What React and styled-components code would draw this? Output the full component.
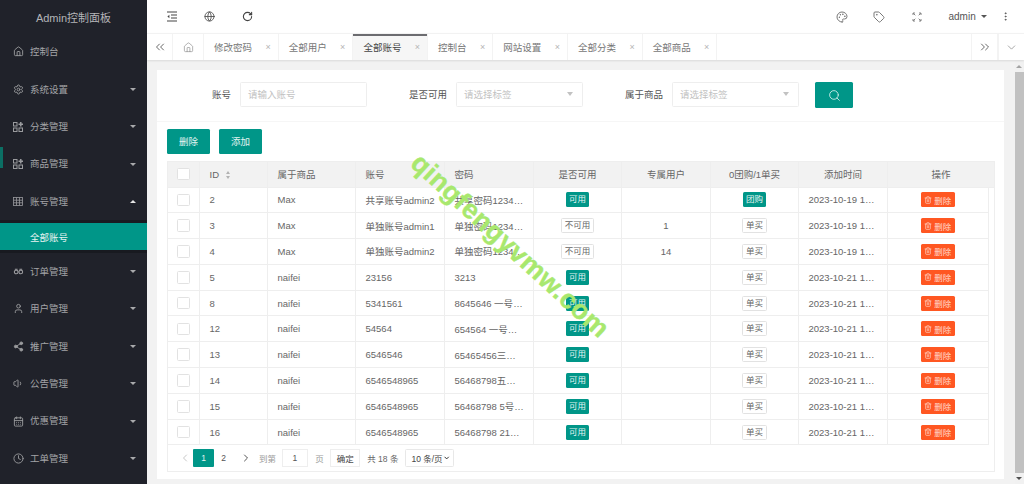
import React from 'react';
import styled, { createGlobalStyle } from 'styled-components';
import {
  Home, User, Share2, Volume1, CalendarDays, Clock, Settings,
  Palette, Tag as TagIcon, RotateCw, Globe, ChevronsLeft, ChevronsRight, ChevronDown,
  ChevronLeft, ChevronRight, Search, Trash2, MoreVertical,
} from 'lucide-react';

const GlobalStyle = createGlobalStyle`
  html, body { margin: 0; height: 100%; overflow: hidden; }
  body {
    font-family: "Liberation Sans", "Noto Sans CJK SC", sans-serif;
    font-size: 9.5px;
    color: #666;
    background: #f2f2f2;
  }
  * { box-sizing: border-box; }
`;

const Shell = styled.div`
  display: flex;
  height: 484px;
  position: relative;
  overflow: hidden;
`;

const Sidebar = styled.aside`
  width: 147px;
  flex: none;
  background: #20222a;
  color: #a3a4a7;
`;

const Logo = styled.div`
  height: 33.3px;
  display: flex;
  align-items: center;
  justify-content: center;
  font-size: 11px;
  color: #b4b5b8;
`;

const NavItem = styled.div`
  height: 37.4px;
  display: flex;
  align-items: center;
  padding: 0 11px 0 13px;
  position: relative;
`;

const NavIcon = styled.span`
  width: 17px;
  display: flex;
  color: #9a9b9e;
`;

const NavLabel = styled.span`
  flex: 1;
  line-height: 1;
`;

const Caret = styled.span`
  width: 0;
  height: 0;
  border-left: 3.5px solid transparent;
  border-right: 3.5px solid transparent;
  border-top: ${(p) => (p.$up ? '0' : `3.5px solid ${p.$dark ? '#555' : '#a9aaac'}`)};
  border-bottom: ${(p) => (p.$up ? '3.5px solid #e6e6e6' : '0')};
`;

const HoverMark = styled.span`
  position: absolute;
  left: 0;
  top: 2px;
  width: 3px;
  height: 21px;
  background: #0b6f64;
`;

const SubMenu = styled.div`
  height: 32.6px;
  padding: 3px 0 3px;
  background: #181a20;
`;

const SubItem = styled.div`
  height: 100%;
  background: #009688;
  color: #e8f3f2;
  display: flex;
  align-items: center;
  padding-left: 30px;
`;

const Main = styled.div`
  flex: 1;
  min-width: 0;
  display: flex;
  flex-direction: column;
`;

const TopBar = styled.header`
  height: 33px;
  flex: none;
  background: #fff;
  display: flex;
  align-items: center;
  padding-left: 6.5px;
  color: #555;
`;

const BarSlot = styled.span`
  width: 37.5px;
  display: flex;
  justify-content: center;
  color: ${(p) => p.$color || '#444'};
`;

const Spacer = styled.span`
  flex: 1;
`;

const UserMenu = styled.div`
  display: flex;
  align-items: center;
  gap: 5px;
  margin-left: 13px;
  width: 38px;
  flex: none;
  font-size: 10px;
  color: #555;
`;

const TabStrip = styled.nav`
  height: 27px;
  flex: none;
  background: #fff;
  display: flex;
  border-top: 1px solid #f2f2f2;
  box-shadow: 0 1px 2px rgba(0, 0, 0, 0.1);
  position: relative;
`;

const TabButton = styled.span`
  width: ${(p) => p.$w}px;
  flex: none;
  display: flex;
  align-items: center;
  justify-content: center;
  color: ${(p) => p.$color || '#555'};
  border-right: ${(p) => (p.$noline ? '0' : '1px solid #f3f3f3')};
  border-left: ${(p) => (p.$leftline ? '1px solid #f3f3f3' : '0')};
`;

const Tab = styled.span`
  display: flex;
  align-items: center;
  flex: none;
  padding: 0 5.7px 0 10px;
  gap: 12px;
  color: ${(p) => (p.$active ? '#444' : '#777')};
  background: ${(p) => (p.$active ? '#f6f6f6' : 'transparent')};
  border-right: 1px solid #f3f3f3;
  box-shadow: ${(p) => (p.$active ? 'inset 0 2px 0 #6c6c70' : 'none')};
`;

const TabClose = styled.span`
  width: 8px;
  font-size: 9px;
  line-height: 1;
  color: #b5b5b5;
  text-align: center;
`;

const ContentRow = styled.div`
  flex: 1;
  min-height: 0;
  display: flex;
`;

const Content = styled.main`
  flex: 1;
  min-width: 0;
  padding: 10px 10.5px 0 10px;
`;

const ScrollTrack = styled.div`
  width: 9.5px;
  flex: none;
  background: #f1f1f1;
  display: flex;
  flex-direction: column;
  align-items: center;
`;

const ScrollArrow = styled.span`
  width: 0;
  height: 0;
  flex: none;
  margin: ${(p) => (p.$down ? '4px 0' : '4.5px 0 4.2px')};
  border-left: 3px solid transparent;
  border-right: 3px solid transparent;
  border-bottom: ${(p) => (p.$down ? '0' : '3px solid #a3a3a3')};
  border-top: ${(p) => (p.$down ? '3px solid #505050' : '0')};
`;

const ScrollThumb = styled.div`
  width: 100%;
  flex: 1;
  background: #c1c1c1;
`;

const Card = styled.section`
  background: #fff;
  height: 409px;
  display: flex;
  flex-direction: column;
`;

const FilterForm = styled.div`
  height: 51.5px;
  flex: none;
  padding-top: 11.5px;
  border-bottom: 1px solid #f6f6f6;
  display: flex;
  align-items: flex-start;
`;

const FilterItem = styled.div`
  width: 216px;
  flex: none;
  display: flex;
  align-items: center;
  height: 25.5px;
`;

const FilterLabel = styled.label`
  width: 83px;
  padding-right: 9px;
  text-align: right;
  color: #555;
`;

const FieldBox = styled.div`
  width: 127px;
  height: 25.5px;
  border: 1px solid #eee;
  border-radius: 1.5px;
  display: flex;
  align-items: center;
  justify-content: space-between;
  padding: 0 9px 0 7px;
  color: #c2c2c2;
`;

const FieldCaret = styled.span`
  width: 0;
  height: 0;
  border-left: 3.5px solid transparent;
  border-right: 3.5px solid transparent;
  border-top: 4px solid #c2c2c2;
`;

const SearchButton = styled.button`
  width: 38px;
  height: 26px;
  margin: 0.5px 0 0 10px;
  border: 0;
  border-radius: 1.5px;
  background: #009688;
  color: #d5efec;
  display: flex;
  align-items: center;
  justify-content: center;
  padding: 0;
`;

const Toolbar = styled.div`
  display: flex;
  gap: 9px;
  padding: 7px 10px 7px;
  flex: none;
`;

const PrimaryButton = styled.button`
  width: 43px;
  height: 25px;
  border: 0;
  border-radius: 1.5px;
  background: #009688;
  color: #e4f4f2;
  font: inherit;
  padding: 0;
`;

const TableWrap = styled.div`
  margin: 0 9px 0 10px;
  border: 1px solid #eee;
  height: 311px;
  display: flex;
  flex-direction: column;
  position: relative;
`;

const DataTable = styled.table`
  width: 827px;
  margin: -1px 0 0 -1px;
  table-layout: fixed;
  border-collapse: collapse;
`;

const HeadCell = styled.th`
  height: 26px;
  padding: ${(p) => (p.$center ? '0 9px' : '0 8px 0 9.5px')};
  background: #f2f2f2;
  border: 1px solid #eee;
  font-weight: 400;
  color: #666;
  text-align: ${(p) => (p.$center ? 'center' : 'left')};
  white-space: nowrap;
  overflow: hidden;
`;

const Cell = styled.td`
  height: 25.8px;
  padding: ${(p) => (p.$center ? '0 9px' : '0 8px 0 9.5px')};
  border: 1px solid #eee;
  color: #666;
  text-align: ${(p) => (p.$center ? 'center' : 'left')};
  white-space: nowrap;
  overflow: hidden;
  text-overflow: ellipsis;
`;

const ActionCell = styled(Cell)`
  padding: 0;
  text-overflow: clip;
`;

const GutterCell = styled.td`
  border: 1px solid #eee;
  border-top: 0;
  border-bottom: 0;
`;

const CheckCell = styled.td`
  padding: 0;
  border: 1px solid #eee;
  position: relative;
  box-shadow: 1px 0 3px rgba(0, 0, 0, 0.07);
`;

const CheckHead = styled.th`
  padding: 0;
  height: 26px;
  background: #f2f2f2;
  border: 1px solid #eee;
  position: relative;
  box-shadow: 1px 0 3px rgba(0, 0, 0, 0.07);
`;

const Checkbox = styled.span`
  display: block;
  width: 12.5px;
  height: 12.5px;
  margin: 0 auto;
  background: #fff;
  border: 1px solid #e2e2e2;
  border-radius: 1.5px;
`;

const SortIcon = styled.span`
  display: inline-flex;
  flex-direction: column;
  gap: 1.5px;
  margin-left: 7px;
  vertical-align: middle;
`;

const SortUp = styled.i`
  width: 0;
  height: 0;
  border-left: 2.5px solid transparent;
  border-right: 2.5px solid transparent;
  border-bottom: 3px solid #b2b2b2;
`;

const SortDown = styled(SortUp)`
  border-bottom: 0;
  border-top: 3px solid #b2b2b2;
`;

const Badge = styled.span`
  display: inline-block;
  height: 15px;
  line-height: ${(p) => (p.$on ? '15px' : '13px')};
  padding: 0 ${(p) => (p.$on ? '2.8px' : '2.5px')};
  font-size: 8.5px;
  border-radius: 1.5px;
  vertical-align: middle;
  background: ${(p) => (p.$on ? '#009688' : '#fff')};
  color: ${(p) => (p.$on ? '#e4f4f2' : '#666')};
  border: ${(p) => (p.$on ? '0' : '1px solid #e2e2e2')};
`;

const DeleteButton = styled.span`
  display: inline-flex;
  align-items: center;
  justify-content: center;
  gap: 2.5px;
  width: 34px;
  height: 15px;
  margin-right: 1px;
  background: #ff5722;
  border-radius: 1.5px;
  color: #ffd9cc;
  font-size: 8.5px;
  vertical-align: middle;
`;

const Pager = styled.div`
  flex: 1;
  display: flex;
  align-items: center;
  padding-left: 8px;
  font-size: 8.5px;
  color: #999;
`;

const PagerArrow = styled.span`
  display: flex;
  width: ${(p) => p.$w}px;
  justify-content: center;
  color: ${(p) => p.$color};
`;

const PageCurrent = styled.span`
  width: 21px;
  height: 18px;
  background: #009688;
  color: #e4f4f2;
  border-radius: 1px;
  display: flex;
  align-items: center;
  justify-content: center;
`;

const PageNumber = styled.span`
  width: 19px;
  text-align: center;
  color: #555;
`;

const PagerText = styled.span`
  margin: ${(p) => p.$m || '0'};
  color: ${(p) => p.$color || '#999'};
  white-space: nowrap;
`;

const PageInput = styled.span`
  width: 26.5px;
  height: 18px;
  margin-left: 5.7px;
  border: 1px solid #eee;
  display: flex;
  align-items: center;
  justify-content: center;
  color: #555;
`;

const ConfirmButton = styled.span`
  width: 30px;
  height: 18px;
  margin-left: 6.5px;
  border: 1px solid #eee;
  display: flex;
  align-items: center;
  justify-content: center;
  color: #444;
`;

const PageSize = styled.span`
  width: 48.5px;
  height: 18px;
  margin-left: 7px;
  border: 1px solid #e8e8e8;
  border-radius: 1.5px;
  display: flex;
  align-items: center;
  justify-content: space-between;
  padding: 0 3px 0 5px;
  white-space: nowrap;
  color: #444;
`;

const Watermark = styled.div`
  position: absolute;
  left: 510px;
  top: 246px;
  transform: translate(-50%, -50%) rotate(42.5deg);
  font-size: 27px;
  font-weight: 700;
  letter-spacing: 0.4px;
  white-space: nowrap;
  color: #a8e86e;
  -webkit-text-stroke: 0.4px #a8e86e;
  pointer-events: none;
`;

const OrderIcon = (
  <svg width="11" height="11" viewBox="0 0 24 24" fill="none" stroke="currentColor" strokeWidth="2.4">
    <circle cx="7" cy="13" r="4" />
    <circle cx="17" cy="13" r="4" />
    <path d="M4 7h6M14 7h6" />
  </svg>
);

const ShrinkIcon = (
  <svg width="12" height="11" viewBox="0 0 12 11" fill="none" stroke="currentColor" strokeWidth="1.1">
    <path d="M1 1h10M5 4h6M5 7h6M1 10h10" />
    <path d="M3.4 3.8 1.4 5.5l2 1.7z" fill="currentColor" stroke="none" />
  </svg>
);

const FullScreenIcon = (
  <svg width="10" height="10" viewBox="0 0 10 10" fill="none" stroke="currentColor" strokeWidth="0.9">
    <path d="M1 3V1h2M7 1h2v2M9 7v2H7M3 9H1V7" />
    <path d="m1.3 1.3 2 2M8.7 1.3l-2 2M8.7 8.7l-2-2M1.3 8.7l2-2" />
  </svg>
);

const AppsIcon = (
  <svg width="10" height="10" viewBox="0 0 10 10" fill="none" stroke="currentColor" strokeWidth="1">
    <rect x="0.5" y="0.5" width="3.5" height="3.5" />
    <rect x="0.5" y="6" width="3.5" height="3.5" />
    <rect x="6" y="6" width="3.5" height="3.5" />
    <path d="M7.75 0v4.5M5.5 2.25H10" strokeWidth="1.6" />
  </svg>
);

const GridIcon = (
  <svg width="10" height="9" viewBox="0 0 10 9" fill="none" stroke="currentColor" strokeWidth="0.8">
    <rect x="0.5" y="0.5" width="9" height="8" />
    <path d="M0.5 3.2h9M0.5 5.8h9M3.5 0.5v8M6.5 0.5v8" />
  </svg>
);

const navTop = [
  { label: '控制台', icon: <Home size={11} />, plain: true },
  { label: '系统设置', icon: <Settings size={11} /> },
  { label: '分类管理', icon: AppsIcon },
  { label: '商品管理', icon: AppsIcon, mark: true },
];

const navBottom = [
  { label: '订单管理', icon: OrderIcon },
  { label: '用户管理', icon: <User size={11} /> },
  { label: '推广管理', icon: <Share2 size={11} fill="currentColor" /> },
  { label: '公告管理', icon: <Volume1 size={11} /> },
  { label: '优惠管理', icon: <CalendarDays size={11} /> },
  { label: '工单管理', icon: <Clock size={11} /> },
];

const tabs = ['修改密码', '全部用户', '全部账号', '控制台', '网站设置', '全部分类', '全部商品'];

const rows = [
  [2, 'Max', '共享账号admin2', '共享密码1234567', true, '', true, '2023-10-19 12:30:16'],
  [3, 'Max', '单独账号admin1', '单独密码1234567', false, '1', false, '2023-10-19 12:30:16'],
  [4, 'Max', '单独账号admin2', '单独密码1234567', false, '14', false, '2023-10-19 12:30:16'],
  [5, 'naifei', '23156', '3213', true, '', false, '2023-10-21 12:30:16'],
  [8, 'naifei', '5341561', '8645646 一号位置', true, '', false, '2023-10-21 12:30:16'],
  [12, 'naifei', '54564', '654564 一号位置', true, '', false, '2023-10-21 12:30:16'],
  [13, 'naifei', '6546546', '65465456三号位置', true, '', false, '2023-10-21 12:30:16'],
  [14, 'naifei', '6546548965', '56468798五号位置', true, '', false, '2023-10-21 12:30:16'],
  [15, 'naifei', '6546548965', '56468798 5号位置', true, '', false, '2023-10-21 12:30:16'],
  [16, 'naifei', '6546548965', '56468798 21号位置', true, '', false, '2023-10-21 12:30:16'],
];

const colWidths = [32, 68, 88, 89, 89, 88, 89, 88, 89, 101, 6];

function NavRow({ item, up }) {
  return (
    <NavItem>
      {item.mark && <HoverMark />}
      <NavIcon>{item.icon}</NavIcon>
      <NavLabel>{item.label}</NavLabel>
      {!item.plain && <Caret $up={up} />}
    </NavItem>
  );
}

function AccountTable() {
  return (
    <DataTable>
      <colgroup>
        {colWidths.map((w, i) => <col key={i} width={w} />)}
      </colgroup>
      <thead>
        <tr>
          <CheckHead><Checkbox /></CheckHead>
          <HeadCell>ID<SortIcon><SortUp /><SortDown /></SortIcon></HeadCell>
          <HeadCell>属于商品</HeadCell>
          <HeadCell>账号</HeadCell>
          <HeadCell>密码</HeadCell>
          <HeadCell $center>是否可用</HeadCell>
          <HeadCell $center>专属用户</HeadCell>
          <HeadCell $center>0团购/1单买</HeadCell>
          <HeadCell $center>添加时间</HeadCell>
          <HeadCell $center colSpan={2}>操作</HeadCell>
        </tr>
      </thead>
      <tbody>
        {rows.map((r) => (
          <tr key={r[0]}>
            <CheckCell><Checkbox /></CheckCell>
            <Cell>{r[0]}</Cell>
            <Cell>{r[1]}</Cell>
            <Cell>{r[2]}</Cell>
            <Cell>{r[3]}</Cell>
            <ActionCell $center><Badge $on={r[4]}>{r[4] ? '可用' : '不可用'}</Badge></ActionCell>
            <Cell $center>{r[5]}</Cell>
            <ActionCell $center><Badge $on={r[6]}>{r[6] ? '团购' : '单买'}</Badge></ActionCell>
            <Cell>{r[7]}</Cell>
            <ActionCell $center>
              <DeleteButton><Trash2 size={8} />删除</DeleteButton>
            </ActionCell>
            <GutterCell />
          </tr>
        ))}
      </tbody>
    </DataTable>
  );
}

export default function App() {
  return (
    <Shell>
      <GlobalStyle />
      <Sidebar>
        <Logo>Admin控制面板</Logo>
        {navTop.map((item) => <NavRow key={item.label} item={item} />)}
        <NavRow item={{ label: '账号管理', icon: GridIcon }} up />
        <SubMenu><SubItem>全部账号</SubItem></SubMenu>
        {navBottom.map((item) => <NavRow key={item.label} item={item} />)}
      </Sidebar>
      <Main>
        <TopBar>
          <BarSlot>{ShrinkIcon}</BarSlot>
          <BarSlot $color="#555"><Globe size={11} /></BarSlot>
          <BarSlot><RotateCw size={11} strokeWidth={2.4} /></BarSlot>
          <Spacer />
          <BarSlot $color="#777"><Palette size={12} /></BarSlot>
          <BarSlot $color="#777"><TagIcon size={12} /></BarSlot>
          <BarSlot $color="#777">{FullScreenIcon}</BarSlot>
          <UserMenu>admin<Caret $dark /></UserMenu>
          <BarSlot $color="#555"><MoreVertical size={11} /></BarSlot>
        </TopBar>
        <TabStrip>
          <TabButton $w={26}><ChevronsLeft size={14} strokeWidth={1.5} /></TabButton>
          <TabButton $w={31} $color="#888"><Home size={11} strokeWidth={1.4} /></TabButton>
          {tabs.map((t) => (
            <Tab key={t} $active={t === '全部账号'}>
              {t}<TabClose>×</TabClose>
            </Tab>
          ))}
          <Spacer />
          <TabButton $w={27} $leftline><ChevronsRight size={14} strokeWidth={1.5} /></TabButton>
          <TabButton $w={26} $noline $leftline $color="#777"><ChevronDown size={13} strokeWidth={1.2} /></TabButton>
        </TabStrip>
        <ContentRow>
          <Content>
            <Card>
              <FilterForm>
                <FilterItem>
                  <FilterLabel>账号</FilterLabel>
                  <FieldBox>请输入账号</FieldBox>
                </FilterItem>
                <FilterItem>
                  <FilterLabel>是否可用</FilterLabel>
                  <FieldBox>请选择标签<FieldCaret /></FieldBox>
                </FilterItem>
                <FilterItem>
                  <FilterLabel>属于商品</FilterLabel>
                  <FieldBox>请选择标签<FieldCaret /></FieldBox>
                </FilterItem>
                <SearchButton><Search size={13} strokeWidth={1.6} /></SearchButton>
              </FilterForm>
              <Toolbar>
                <PrimaryButton>删除</PrimaryButton>
                <PrimaryButton>添加</PrimaryButton>
              </Toolbar>
              <TableWrap>
                <AccountTable />
                <Pager>
                  <PagerArrow $w={17} $color="#c8c8c8"><ChevronLeft size={12} /></PagerArrow>
                  <PageCurrent>1</PageCurrent>
                  <PageNumber>2</PageNumber>
                  <PagerArrow $w={25} $color="#555"><ChevronRight size={12} /></PagerArrow>
                  <PagerText $m="0 0 0 1px">到第</PagerText>
                  <PageInput>1</PageInput>
                  <PagerText $m="0 0 0 7px">页</PagerText>
                  <ConfirmButton>确定</ConfirmButton>
                  <PagerText $m="0 0 0 7px" $color="#666">共 18 条</PagerText>
                  <PageSize>10 条/页<ChevronDown size={8} strokeWidth={3} color="#222" /></PageSize>
                </Pager>
              </TableWrap>
            </Card>
          </Content>
          <ScrollTrack>
            <ScrollArrow />
            <ScrollThumb />
            <ScrollArrow $down />
          </ScrollTrack>
        </ContentRow>
      </Main>
      <Watermark>qingfengyvmw.com</Watermark>
    </Shell>
  );
}
